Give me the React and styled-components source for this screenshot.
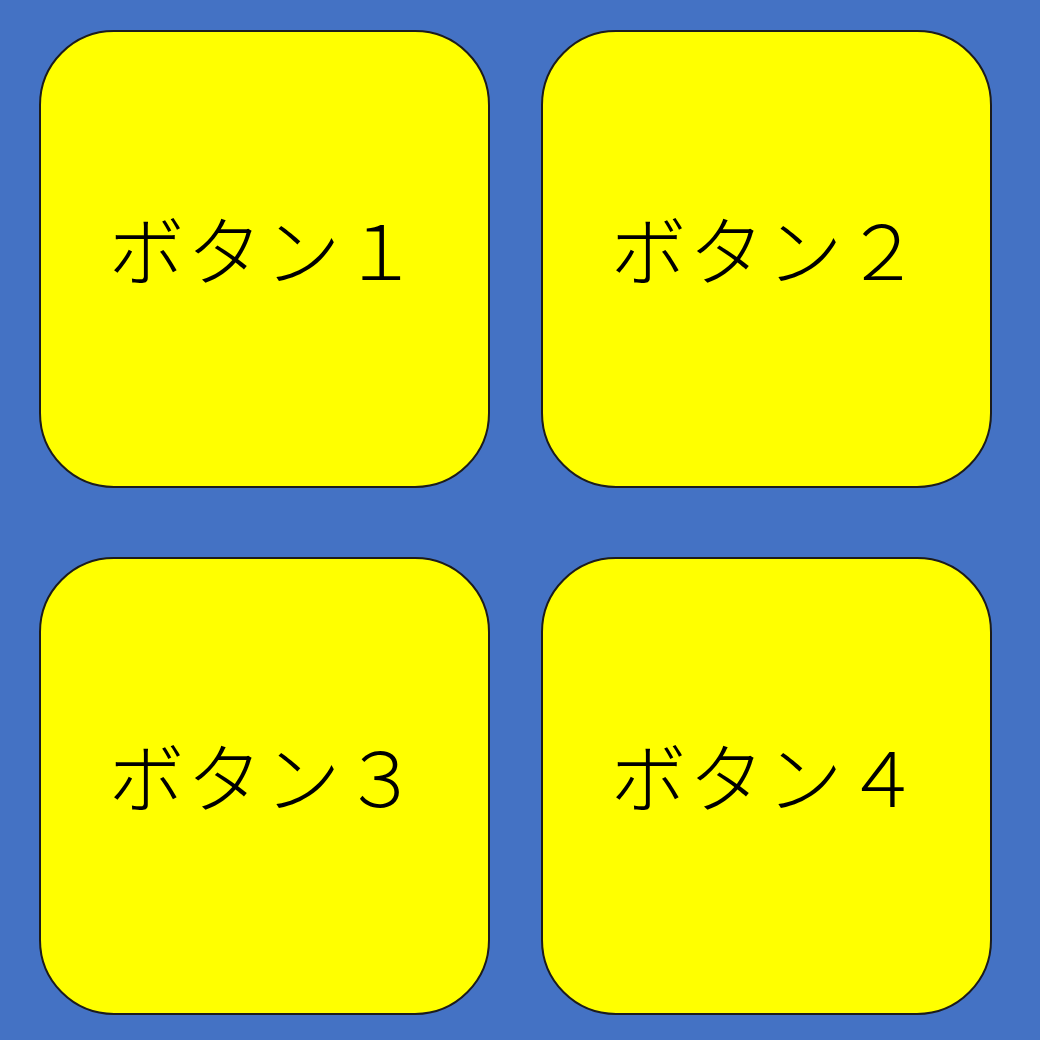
import React from "react";
import styled, { createGlobalStyle } from "styled-components";

const Global = createGlobalStyle`
  html, body { margin: 0; padding: 0; background: #4472c4; }
  * { box-sizing: border-box; }
`;

const Board = styled.div`
  width: 1040px;
  height: 1040px;
  background: #4472c4;
  display: grid;
  grid-template-columns: 451px 451px;
  grid-template-rows: 458px 458px;
  column-gap: 51px;
  row-gap: 69px;
  padding: 30px 0 0 39px;
`;

const Tile = styled.button`
  background: #ffff00;
  border: 2px solid #1c1c1c;
  border-radius: 75px;
  display: flex;
  align-items: center;
  justify-content: center;
  padding: 0 0 24px 0;
  margin: 0;
  font-family: "Noto Sans CJK JP", "Noto Sans", sans-serif;
  font-weight: 300;
  font-size: 76px;
  letter-spacing: 2px;
  color: #000;
  cursor: pointer;
`;

const labels = ["ボタン１", "ボタン２", "ボタン３", "ボタン４"];

export default function App() {
  return (
    <>
      <Global />
      <Board>
        {labels.map((l) => (
          <Tile key={l}>{l}</Tile>
        ))}
      </Board>
    </>
  );
}
